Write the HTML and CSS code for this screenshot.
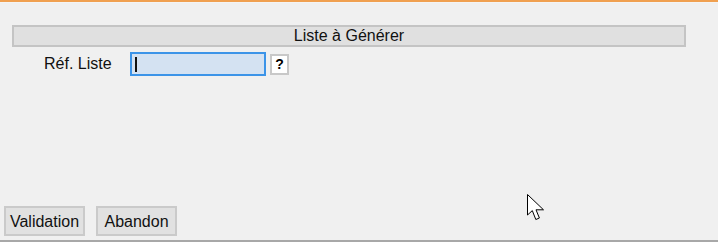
FILE: index.html
```html
<!DOCTYPE html>
<html lang="fr">
<head>
<meta charset="utf-8">
<title>Liste à Générer</title>
<link rel="stylesheet" href="styles.css">
</head>
<body>
<div class="window">
  <div class="topline"></div>
  <div class="content">
    <div class="header">Liste à Générer</div>
    <div class="row">
      <label class="label" for="ref">Réf. Liste</label>
      <div class="input"><span class="caret"></span></div>
      <button class="help">?</button>
    </div>
    <div class="spacer"></div>
    <div class="actions">
      <button class="btn">Validation</button>
      <button class="btn">Abandon</button>
    </div>
  </div>
  <div class="bottomline"></div>
  <svg class="cursor" width="19" height="28" viewBox="0 0 19 28">
    <path d="M0.5 0.5 L0.5 21 L5.3 16.6 L8.8 25.5 L12.4 24 L9 15.8 L16.5 15.8 Z" fill="#fff" stroke="#000" stroke-width="1" stroke-linejoin="miter"/>
  </svg>
</div>
</body>
</html>
```
FILE: styles.css
```css
html, body {
  margin: 0;
  padding: 0;
  background: #f0f0f0;
}
body {
  font-family: "Liberation Sans", Arial, sans-serif;
  font-size: 16px;
  color: #000;
}
.window {
  position: relative;
  width: 718px;
  height: 242px;
  display: flex;
  flex-direction: column;
  background: #f0f0f0;
}
.topline {
  height: 2px;
  background: #f0a050;
  border-bottom: 1px solid #f4f4f4;
}
.content {
  flex: 1;
  display: flex;
  flex-direction: column;
  padding: 22px 0 0 0;
}
.header {
  margin: 0 32px 0 12px;
  height: 18px;
  line-height: 18px;
  border: 2px solid #c4c4c4;
  background: #e0e0e0;
  text-align: center;
  box-sizing: content-box;
  color: #111;
}
.row {
  display: flex;
  align-items: center;
  margin-top: 5px;
  height: 24px;
}
.label {
  margin-left: 44px;
  width: 86px;
  color: #111;
}
.input {
  width: 129px;
  height: 20px;
  border: 2px solid #3c94e8;
  background: #d4e2f2;
  display: flex;
  align-items: center;
  padding-left: 3px;
  box-sizing: content-box;
}
.caret {
  width: 2px;
  height: 15px;
  background: #111;
}
.help {
  margin-left: 4px;
  width: 19px;
  height: 21px;
  padding: 0;
  border: 2px solid #c8c8c8;
  background: #fff;
  font-family: "Liberation Sans", Arial, sans-serif;
  font-weight: bold;
  font-size: 14px;
  line-height: 16px;
  color: #000;
}
.spacer { flex: 1; }
.actions {
  display: flex;
  gap: 11px;
  padding-left: 4px;
  margin-bottom: 4px;
}
.btn {
  height: 30px;
  width: 81px;
  padding: 0;
  border: 2px solid #cacaca;
  background: #e1e1e1;
  font-family: "Liberation Sans", Arial, sans-serif;
  font-size: 16px;
  line-height: 18px;
  padding-top: 2px;
  color: #111;
}
.bottomline {
  height: 2px;
  background: #a8a8a8;
}
.cursor {
  position: absolute;
  left: 527px;
  top: 194px;
}
```
